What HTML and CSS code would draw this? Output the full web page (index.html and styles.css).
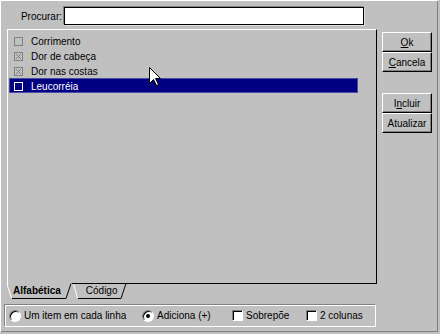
FILE: index.html
```html
<!DOCTYPE html>
<html>
  <head>
    <meta charset="utf-8">
    <title>Procurar</title>
    <link rel="stylesheet" href="styles.css">
  </head>
  <body>
    <div class="window">
      <div class="search">
        <label class="search-label" for="procurar">Procurar:</label>
        <input class="search-field" id="procurar" type="text">
      </div>

      <div class="main">
        <div class="left">
          <div class="page">
            <ul class="list">
              <li class="item"><span class="check"></span>Corrimento</li>
              <li class="item"><span class="check"><svg width="7" height="7"><path d="M1 1l5 5M6 1l-5 5" stroke="#808080"/></svg></span>Dor de cabeça</li>
              <li class="item"><span class="check"><svg width="7" height="7"><path d="M1 1l5 5M6 1l-5 5" stroke="#808080"/></svg></span>Dor nas costas</li>
              <li class="item selected"><span class="check"></span>Leucorréia</li>
            </ul>
          </div>

          <div class="tabs">
            <svg class="tab-lines" width="373" height="17">
              <path d="M68 0.5H373" stroke="#000"/>
              <path d="M3.5 0V3L7.5 15" stroke="#fff" fill="none"/>
              <path d="M8 15.5H62L67 0.5" stroke="#000" fill="none"/>
              <path d="M69.5 1L73.5 15" stroke="#fff" fill="none"/>
              <path d="M74 15.5H117L122 0.5" stroke="#000" fill="none"/>
            </svg>
            <span class="tab active">Alfabética</span>
            <span class="tab">Código</span>
          </div>

          <div class="options">
            <label class="opt opt-linha"><span class="radio"></span>Um item em cada linha</label>
            <label class="opt opt-adiciona"><span class="radio on"></span>Adiciona (+)</label>
            <label class="opt opt-sobrepoe"><span class="box"></span>Sobrepõe</label>
            <label class="opt"><span class="box"></span>2 colunas</label>
          </div>
        </div>

        <div class="buttons">
          <button class="btn"><u>O</u>k</button>
          <button class="btn"><u>C</u>ancela</button>
          <button class="btn btn-gap">I<u>n</u>cluir</button>
          <button class="btn">Atualizar</button>
        </div>
      </div>

      <svg class="cursor" width="13" height="20">
        <path d="M0.5 0.5V16.5L4.5 12.5L7.5 18.5L9.5 17.5L6.5 11.5H11.5Z" fill="#fff" stroke="#000"/>
      </svg>
    </div>
  </body>
</html>
```

FILE: styles.css
```css
body {
  margin: 0;
  background-color: #c0c0c0;
  font-family: "Liberation Sans", Arial, sans-serif;
  font-size: 10px;
  color: #000;
}

.window {
  position: relative;
  width: 438px;
  height: 332px;
  background-color: #c0c0c0;
  box-shadow: inset 1px 1px #fff, inset -1px -1px #808080;
  overflow: hidden;
}

.search {
  display: flex;
  align-items: center;
  padding: 7px 0 0 18px;
  height: 18px;
}

.search-label {
  flex-shrink: 0;
  width: 44px;
  text-align: right;
  white-space: nowrap;
}

.search-field {
  margin: 0 0 0 2px;
  width: 300px;
  height: 18px;
  box-sizing: border-box;
  border: 1px solid #000;
  box-shadow: -1px -1px 0 #808080, 1px 1px 0 #dfdfdf;
  background: #fff;
  padding: 0 2px;
  outline: none;
}

.main {
  display: flex;
  margin-top: 4px;
}

.left {
  margin-left: 4px;
  width: 373px;
}

.page {
  margin-left: 3px;
  width: 370px;
  height: 254px;
  box-sizing: border-box;
  border-top: 1px solid #fff;
  border-left: 1px solid #fff;
  border-right: 1px solid #000;
}

.list {
  list-style: none;
  margin: 0;
  padding: 3px 0 0 1px;
}

.item {
  display: flex;
  align-items: center;
  width: 349px;
  height: 15px;
  line-height: 15px;
  padding-top: 1px;
  box-sizing: border-box;
}

.check {
  display: flex;
  align-items: center;
  justify-content: center;
  width: 9px;
  height: 9px;
  box-sizing: border-box;
  margin: 0 8px 0 5px;
  border: 1px solid #808080;
}

.selected {
  background-color: #000080;
  color: #fff;
  box-shadow: inset 0 0 0 1px #4a4aa8;
}

.selected .check {
  border-color: #fff;
}

.tabs {
  position: relative;
  height: 16px;
  line-height: 16px;
  padding-left: 9px;
}

.tab-lines {
  position: absolute;
  left: 0;
  top: 0;
}

.tab {
  position: relative;
  display: inline-block;
}

.tab.active {
  font-weight: bold;
  width: 70px;
}

.options {
  display: flex;
  align-items: center;
  margin-top: 5px;
  width: 372px;
  height: 23px;
  box-sizing: border-box;
  padding-left: 4px;
  border: 1px solid;
  border-color: #808080 #fff #fff #808080;
  box-shadow: inset 1px 1px #fff;
}

.opt {
  display: flex;
  align-items: center;
}

.opt-linha {
  width: 133px;
}

.opt-adiciona {
  width: 90px;
}

.opt-sobrepoe {
  width: 74px;
}

.radio {
  position: relative;
  width: 12px;
  height: 12px;
  box-sizing: border-box;
  margin-right: 3px;
  border-radius: 50%;
  background: #fff;
  border: 1px solid;
  border-color: #808080 #fff #fff #808080;
  box-shadow: inset 1px 1px #000;
}

.radio.on::after {
  content: "";
  position: absolute;
  left: 3px;
  top: 3px;
  width: 4px;
  height: 4px;
  border-radius: 50%;
  background: #000;
}

.box {
  width: 11px;
  height: 11px;
  box-sizing: border-box;
  margin-right: 3px;
  background: #fff;
  border: 1px solid;
  border-color: #808080 #fff #fff #808080;
  box-shadow: inset 1px 1px #000;
}

.buttons {
  display: flex;
  flex-direction: column;
  margin: 3px 0 0 5px;
}

.btn {
  width: 50px;
  height: 20px;
  padding: 0;
  font-family: "Liberation Sans", Arial, sans-serif;
  font-size: 10px;
  color: #000;
  background: #c0c0c0;
  border: 1px solid;
  border-color: #fff #000 #000 #fff;
  box-shadow: inset -1px -1px #808080;
}

.btn-gap {
  margin-top: 21px;
}

.cursor {
  position: absolute;
  left: 149px;
  top: 67px;
}
```
